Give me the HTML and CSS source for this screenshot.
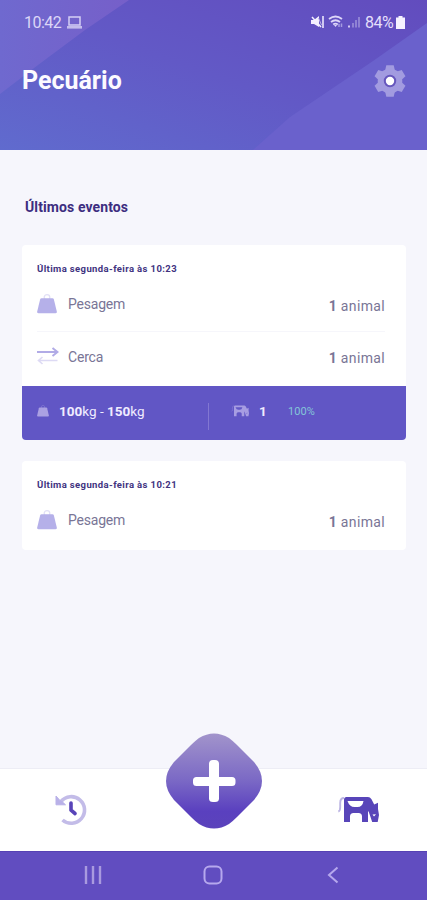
FILE: index.html
```html
<!DOCTYPE html>
<html lang="pt-BR">
<head>
<meta charset="utf-8">
<meta name="viewport" content="width=device-width, initial-scale=1">
<title>Pecuário</title>
<link rel="stylesheet" href="styles.css">
</head>
<body>
<svg class="defs" width="0" height="0" aria-hidden="true">
  <symbol id="weight" viewBox="0 0 20 20">
    <circle cx="10" cy="3.500" r="2.800" fill="none" stroke="currentColor" stroke-width="1.300" opacity=".4"/>
    <path d="M4.600 4.300h10.800q1.200 0 1.500 1.100l2.900 12.100q.3 1.700-1.400 1.700H1.600q-1.700 0-1.400-1.700L3.100 5.400Q3.400 4.300 4.600 4.300z" fill="currentColor"/>
  </symbol>
  <symbol id="cow" viewBox="0 0 42 28">
    <path d="M7 2Q3.200 2 3.200 7V11Q3.200 15 1.300 15.500" fill="none" stroke="currentColor" stroke-width="1.900" opacity=".4"/>
    <path fill="currentColor" fill-rule="evenodd" d="M9.500 1H31q2 0 3.500 2.300l2.700 5.200 3.800-1.800V13l1 6-1.300 7h-5.500L31.800 16l-.8-1v11h-6v-5.500q0-3.500-3.500-3.500h-5q-3.500 0-3.500 3.500V26H7V4q0-3 2.500-3zM10.500 5q2 6 7 6h3q5 0 6-6zM35.500 18.500l1.500 2 2-2.200z"/>
    <path fill="currentColor" d="M34 12.500l3 1.500-2 4-2-2z"/>
  </symbol>
</svg>
<div class="phone">
  <header class="header">
    <svg class="header-bg" viewBox="0 0 427 150" aria-hidden="true">
      <defs>
        <linearGradient id="hg" x1="0" y1="1" x2="1" y2="0"><stop offset="0" stop-color="#606bce"/><stop offset=".5" stop-color="#6259c6"/><stop offset="1" stop-color="#624cbe"/></linearGradient>
        <linearGradient id="hl" x1="0" y1="0" x2="1" y2="0"><stop offset="0" stop-color="#6f69cf"/><stop offset="1" stop-color="#765fc9"/></linearGradient>
      </defs>
      <path fill="url(#hg)" d="M0 0h427v150H0z"/>
      <path fill="url(#hl)" d="M0 0h129L85 30 38 65 0 94z"/>
      <path fill="#6a61cc" d="M427 23 373 61 290 117 253 150h174z"/>
    </svg>
    <div class="status">
      <span class="clock">10:42</span>
      <svg class="laptop" width="15" height="13" viewBox="0 0 15 13"><path d="M2 1h11v8H2z" fill="none" stroke="#d5cff5" stroke-width="1.500"/><path d="M0 10h15v2.600H0z" fill="#c3bcec"/></svg>
      <span class="spacer"></span>
      <svg class="radio" width="51" height="14" viewBox="0 0 51 14">
        <path d="M0 5h3l5-4v11L3 9H0z" fill="#f4f0ff"/><path d="m1 2 9 10M12 1v12" stroke="#f4f0ff" stroke-width="1.500"/><path d="m7.500 3 3 7" stroke="#b8afe7"/>
        <path d="M18 4q6.500-5 13 0M20 7q4.500-3.500 9 0M22.200 9.500q2.300-1.800 4.600 0" fill="none" stroke="#ddd6f8" stroke-width="1.800"/><path d="m23 10 1.500 2 1.500-2z" fill="#ddd6f8"/><path d="M28 12V9m2.500 3V8.500" stroke="#a49be0" stroke-width="1.500"/>
        <path d="M37 10.500h2v2h-2z" fill="#d3caf3"/><path d="M41 12.500V8h2v4.500zM44 12.500V5h2v7.500zM47 12.500V2h2v10.500z" fill="#8f82d4"/>
      </svg>
      <span class="percent">84%</span>
      <svg class="battery" width="9" height="13" viewBox="0 0 9 13"><path d="M2.500 0h4v1.500H9V13H0V1.500h2.500z" fill="#f5f2ff"/></svg>
    </div>
    <div class="titlebar">
      <h1>Pecuário</h1>
      <svg class="gear" width="32" height="32" viewBox="-16 -16 32 32">
        <g fill="#a29be0"><circle r="12.300"/><path id="tooth" d="M-5-10-3.700-15.700H3.700L5-10V10L3.700 15.700H-3.700L-5 10z"/><use href="#tooth" transform="rotate(60)"/><use href="#tooth" transform="rotate(120)"/></g>
        <circle r="5.200" fill="#fff" stroke="#6657bd" stroke-width="2"/>
      </svg>
    </div>
  </header>
  <main class="content">
    <h2>Últimos eventos</h2>
    <section class="card">
      <h3>Última segunda-feira às 10:23</h3>
      <div class="row">
        <svg class="icon"><use href="#weight"/></svg><span class="name">Pesagem</span><span class="count"><b>1</b> animal</span>
      </div>
      <div class="row second">
        <svg class="swap" width="22" height="18" viewBox="0 0 22 18"><path d="M0 5h20M15.500 1l5 4-5 4" fill="none" stroke="#b1abe6" stroke-width="2"/><path d="M20.500 13.500H2M5.500 10l-4 3.500 4 3.500" fill="none" stroke="#dddaf4" stroke-width="1.600"/></svg><span class="name">Cerca</span><span class="count"><b>1</b> animal</span>
      </div>
      <div class="summary">
        <svg class="mini-weight"><use href="#weight"/></svg>
        <span class="range"><b>100</b>kg - <b>150</b>kg</span>
        <span class="divider"></span>
        <svg class="mini-cow"><use href="#cow"/></svg>
        <b class="one">1</b>
        <span class="rate">100%</span>
      </div>
    </section>
    <section class="card short">
      <h3>Última segunda-feira às 10:21</h3>
      <div class="row">
        <svg class="icon"><use href="#weight"/></svg><span class="name">Pesagem</span><span class="count"><b>1</b> animal</span>
      </div>
    </section>
  </main>
  <nav class="tabs">
    <svg class="history" width="34" height="34" viewBox="0 0 34 34"><path d="M7 8.500A13.300 13.300 0 1 1 8.500 27" fill="none" stroke="#c3bce8" stroke-width="3.600"/><path d="M2 3v8.800h9.500L8.500 9 6 7.500z" fill="#b9b1e8" stroke="#b9b1e8"/><path d="M17 10v7.200l4 3.300" fill="none" stroke="#5844b8" stroke-width="3.600" stroke-linecap="round" stroke-linejoin="round"/></svg>
    <svg class="add" width="96" height="96" viewBox="0 0 96 96">
      <defs><linearGradient id="ag" x1="0" y1="0" x2="0" y2="1"><stop offset="0" stop-color="#a294cb"/><stop offset=".5" stop-color="#7a68c5"/><stop offset=".82" stop-color="#5a40bf"/><stop offset="1" stop-color="#5b43bb"/></linearGradient></defs>
      <path fill="url(#ag)" d="M33 5Q48-4 63 5Q67 8 71 12L88 29Q104 48 88 67L71 84Q67 88 63 91Q48 100 33 91Q29 88 25 84L8 67Q-8 48 8 29L25 12Q29 8 33 5z"/>
      <path fill="#fff" d="M47 27h2q4 0 4 4v13h13q3.500 0 3.500 3.500v2q0 3.500-3.500 3.500H53v12.500q0 3.500-4 3.500h-2q-4 0-4-3.500V53H30.500q-3.500 0-3.500-3.500v-2q0-3.500 3.500-3.500H43V31q0-4 4-4z"/>
    </svg>
    <svg class="cow"><use href="#cow"/></svg>
  </nav>
  <footer class="system">
    <svg width="18" height="18" viewBox="0 0 18 18"><path d="M2 0v18M9 0v18M16 0v18" stroke="#a99adf" stroke-width="2.400"/></svg>
    <svg class="home" width="20" height="20" viewBox="0 0 20 20"><rect x="1.500" y="1.500" width="17" height="17" rx="5" fill="none" stroke="#b6a8ed" stroke-width="2"/></svg>
    <svg width="12" height="18" viewBox="0 0 12 18"><path d="M10.500 1.500 2 9l8.500 7.500" fill="none" stroke="#b6a8ed" stroke-width="2"/></svg>
  </footer>
</div>
</body>
</html>
```
FILE: styles.css
```css
* { box-sizing: border-box; }
body { margin: 0; font-family: Roboto, "Liberation Sans", sans-serif; background: #f6f6fc; }
h1, h2, h3 { margin: 0; white-space: nowrap; }
svg { display: block; flex: none; }
span { white-space: nowrap; }
.defs { position: absolute; }
.phone { width: 427px; height: 900px; display: flex; flex-direction: column; overflow: hidden; }

.header { position: relative; height: 150px; flex: none; }
.header-bg { position: absolute; inset: 0; width: 427px; height: 150px; }
.status { position: relative; display: flex; height: 44px; padding: 0 22px 0 24px; align-items: center; color: #dcd6f7; font-size: 16px; line-height: 20px; }
.status span { padding-top: 2px; }
.clock { width: 38px; letter-spacing: -.5px; }
.laptop { margin-left: 5px; }
.spacer { flex: 1; }
.percent { margin-left: 3px; width: 29px; letter-spacing: -.5px; color: #e5dffb; }
.battery { margin-left: 2px; }
.titlebar { position: relative; height: 74px; padding: 0 20px 0 22px; display: flex; align-items: center; justify-content: space-between; }
.titlebar h1 { color: #fcfaff; font-size: 25px; line-height: 30px; font-weight: 700; }
.gear { margin-right: 1px; }

.content { height: 618px; flex: none; padding: 46px 21px 0 22px; background: #f6f6fc; }
h2 { height: 24px; padding-left: 3px; font-size: 14px; line-height: 23px; letter-spacing: .1px; color: #3d2d80; }
.card { margin-top: 25px; height: 195px; padding: 16px 0 0; background: #fff; border-radius: 4px; display: flex; flex-direction: column; overflow: hidden; }
.card.short { margin-top: 21px; height: 89px; }
h3 { height: 14px; padding-left: 15px; font-size: 9.500px; line-height: 15px; letter-spacing: .38px; color: #41337f; }
.row { height: 56px; margin: 0 21px 0 15px; display: flex; align-items: center; flex: none; color: #797596; font-size: 14px; }
.row .name { margin-left: 11px; padding-top: 2px; letter-spacing: -.2px; }
.row .count { margin-left: auto; padding-top: 5px; letter-spacing: .35px; }
.row.second { height: 55px; border-top: 1px solid #f6f6fb; padding-bottom: 7px; }
.second .name { margin-left: 9px; }
.second .count { padding-top: 4px; }
.icon { width: 20px; height: 20px; color: #b5b0e9; }
.row:not(.second) .icon { margin-top: 2px; }
.summary { height: 54px; flex: none; margin-top: auto; padding: 0 15px; display: flex; align-items: center; background: #6156c5; color: #f0ecff; font-size: 13.500px; }
.mini-weight { width: 12px; height: 12px; color: #aaa0e2; margin-bottom: 5px; }
.range { width: 149px; margin: 0 0 4px 10px; }
.divider { width: 1px; height: 27px; margin-top: 7px; background: #8277d2; }
.mini-cow { width: 18px; height: 12px; margin: 0 0 4px 22px; color: #a79de2; }
.one { margin: 0 0 4px 10px; width: 8px; }
.rate { margin: 0 0 4px 21px; font-size: 11px; letter-spacing: .1px; color: #84c5d8; }

.tabs { position: relative; height: 83px; flex: none; display: flex; align-items: center; justify-content: space-between; padding: 0 48px 0 54px; background: #fff; border-top: 1px solid #ededf5; }
.add { position: absolute; left: 166px; top: -36px; }
.cow { width: 42px; height: 28px; color: #5845b9; }
.system { flex: 1; display: flex; align-items: center; justify-content: space-between; padding: 0 88px 2px 84px; background: #614dc0; border-top: 1px solid #5641b4; }
.home { margin-right: 4px; }
```
